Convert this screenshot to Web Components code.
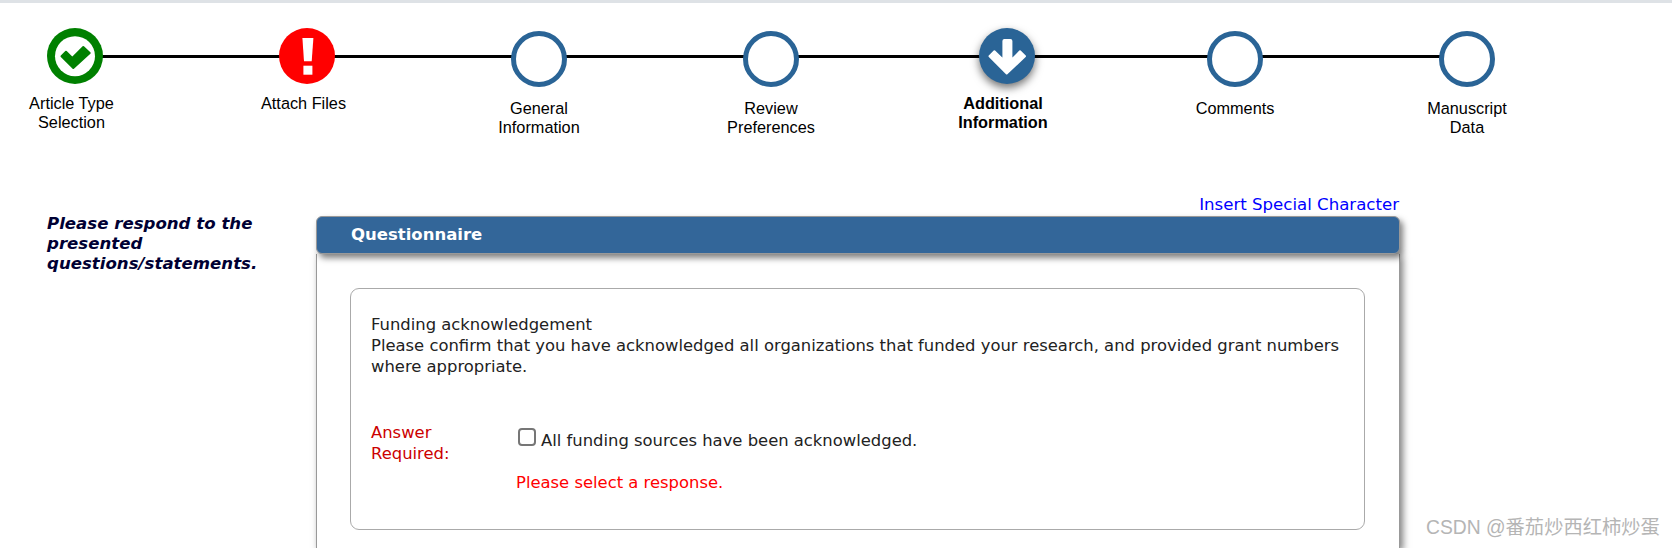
<!DOCTYPE html>
<html><head><meta charset="utf-8"><style>
html,body{margin:0;padding:0;background:#fff;height:548px;overflow:hidden}
body{font-family:"DejaVu Sans",sans-serif}
</style></head><body>
<template id="t-stepper"><style>
:host{display:flex;position:relative;gap:116px;padding:0 0 0 17px;border-top:3px solid #dee2e6;height:150px}
.line{position:absolute;left:75px;width:1392px;top:52px;height:3px;background:#000}
::slotted(*){position:relative}
</style><div class="line"></div><slot></slot></template>

<template id="t-step"><style>
:host{display:flex;flex-direction:column;align-items:center;width:116px;padding-top:25px;font:16.3px/19px "Liberation Sans",Arial,sans-serif;color:#000;text-align:center}
.ic{width:56px;height:56px;border-radius:50%;box-sizing:border-box;flex:none}
svg{display:block;width:56px;height:56px}
:host([state=plain]) .ic{margin-top:3px;border:5px solid #2a6496;background:#fff}
:host([state=current]) .ic{margin-left:8px;box-shadow:0 4px 8px rgba(0,0,0,.55);background:#2a6496}
:host([state=done]) .ic{background:#008000}
:host([state=error]) .ic{background:#f00}
.lb{margin-top:10px;width:100px}
:host([state=plain]) .lb{margin-top:12px}
:host([state=done]) .lb,:host([state=error]) .lb{margin-right:7px}
:host([state=current]) .lb{font-weight:700}
</style><div class="ic"></div><div class="lb"><slot></slot></div></template>

<template id="t-side"><style>
:host{display:block;width:226px;margin-top:9px;font:italic 700 16.6px/20px "DejaVu Sans",Verdana,sans-serif;color:#003}
</style><slot></slot></template>

<template id="t-panel"><style>
:host{display:block;width:1084px}
.tools{display:flex;justify-content:flex-end;height:22px;font:16.6px/22px "DejaVu Sans",Verdana,sans-serif;color:#00f;margin-top:-11px;padding-right:1px}
.hd{position:relative;height:38px;box-sizing:border-box;background:#369;border:1px solid #999;border-radius:6px;color:#fff;font:700 16.5px/36px "DejaVu Sans",Verdana,sans-serif;padding-left:34px;box-shadow:3px 4px 6px rgba(0,0,0,.5)}
.bd{border:solid #999;border-width:0 1px;padding:34px 34px 0 33px;height:294px;box-sizing:border-box;box-shadow:3px 3px 7px rgba(0,0,0,.5);background:#fff}
</style><div class="tools"><span>Insert Special Character</span></div><div class="hd">Questionnaire</div><div class="bd"><slot></slot></div></template>

<template id="t-question"><style>
:host{display:block;height:242px;box-sizing:border-box;border:1px solid #aaa;border-radius:9px;padding:25px 17px 0 20px;font:16.4px/21px "DejaVu Sans",Verdana,sans-serif;color:#222}
.a{display:grid;grid-template-columns:145px 1fr;margin-top:45px}
.lab{color:#c00}
.ans{padding-top:6px}
.opt{display:flex;align-items:flex-start}
.cb{appearance:none;width:18px;height:18px;box-sizing:border-box;border:2px solid #767676;border-radius:4px;margin:0 5px 0 2px;background:#fff;flex:none}
.t{padding-top:2px}
.err{color:#f00;margin-top:21px}
</style><div><slot></slot></div><div class="a"><div class="lab">Answer<br>Required:</div><div class="ans"><div class="opt"><input class="cb" type="checkbox"><span class="t">All funding sources have been acknowledged.</span></div><div class="err">Please select a response.</div></div></div></template>

<template id="t-mark"><style>
:host{position:absolute;left:1426px;top:516px;font:19.3px/24px "Liberation Sans","Noto Sans CJK SC",sans-serif;color:#b5b5b5;white-space:nowrap}
</style><slot></slot></template>

<app-stepper>
<app-step state="done">Article Type Selection</app-step>
<app-step state="error">Attach Files</app-step>
<app-step state="plain">General Information</app-step>
<app-step state="plain">Review Preferences</app-step>
<app-step state="current">Additional Information</app-step>
<app-step state="plain">Comments</app-step>
<app-step state="plain">Manuscript Data</app-step>
</app-stepper>
<app-main></app-main>
<app-mark>CSDN @番茄炒西红柿炒蛋</app-mark>

<script>
const ICONS={
done:'<svg viewBox="0 0 56 56"><circle cx="28" cy="28.200" r="20" fill="#fff"/><path d="M14.500 28.300L19 23.700 25.300 30 36.300 19 42.700 25 26.300 40z" fill="#008000" stroke="#008000" stroke-width="2" stroke-linejoin="round"/></svg>',
error:'<svg viewBox="0 0 56 56"><path d="M23.400 10H34.400L32.700 33.300H25z" fill="#fff"/><rect x="24.400" y="37.700" width="9" height="9" fill="#fff"/></svg>',
current:'<svg viewBox="0 0 56 56"><path d="M27.700 45.500L10.500 28.300 15.400 23.300 24.400 32V13q0-1 1-1h6q1 0 1 1V32L41 23.300 46 28.300z" fill="#fff" stroke="#fff" stroke-width="2" stroke-linejoin="round"/></svg>'
};
function def(name,tpl){customElements.define(name,class extends HTMLElement{constructor(){super();this.attachShadow({mode:'open'}).appendChild(document.getElementById(tpl).content.cloneNode(true))}})}
customElements.define('app-step',class extends HTMLElement{
  constructor(){super();this.attachShadow({mode:'open'}).appendChild(document.getElementById('t-step').content.cloneNode(true))}
  connectedCallback(){const s=this.getAttribute('state');if(ICONS[s])this.shadowRoot.querySelector('.ic').innerHTML=ICONS[s]}
});
def('app-stepper','t-stepper');
def('app-side','t-side');
def('app-panel','t-panel');
def('app-question','t-question');
def('app-mark','t-mark');
customElements.define('app-main',class extends HTMLElement{constructor(){super();const r=this.attachShadow({mode:'open'});r.innerHTML='<style>:host{display:flex;padding:52px 0 0 47px;gap:43px;align-items:flex-start}</style><app-side>Please respond to the presented questions/statements.</app-side><app-panel><app-question>Funding acknowledgement<br>Please confirm that you have acknowledged all organizations that funded your research, and provided grant numbers where appropriate.</app-question></app-panel>'}});
</script>
</body></html>
